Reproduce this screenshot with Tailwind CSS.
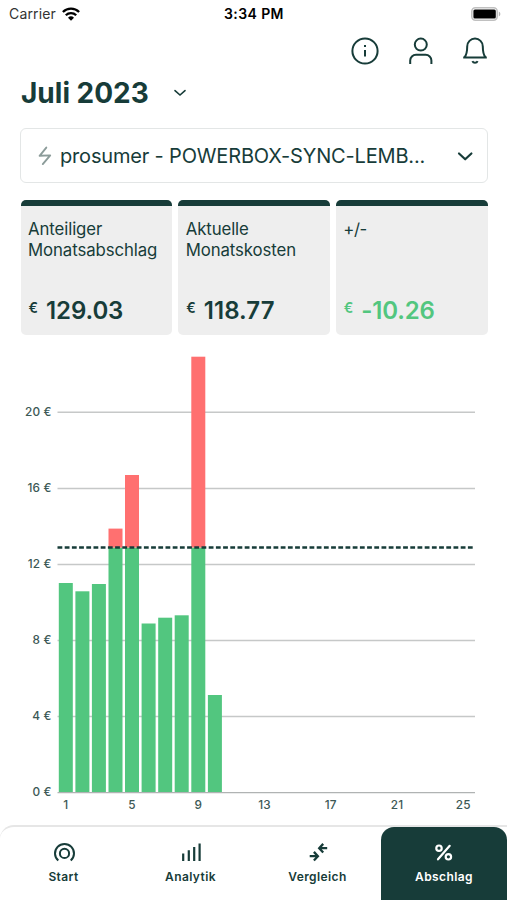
<!DOCTYPE html>
<html lang="de">
  <head>
    <meta charset="utf-8" />
    <title>Abschlag</title>
    <script src="https://cdn.jsdelivr.net/npm/@tailwindcss/browser@4"></script>
  </head>
  <body class="bg-white overflow-hidden font-['Inter','Liberation_Sans',sans-serif] text-[#173c39]">
    <div class="w-[507px] h-[900px] flex flex-col">
      <!-- STATUS BAR -->
      <div class="h-[27px] shrink-0 pl-[9px] pr-[6px] grid grid-cols-3 items-center text-black text-[14px]">
        <div class="flex items-center gap-[6px]">
          <span class="text-[#333] tracking-[0.15px]">Carrier</span>
          <svg class="w-[18px] h-[14px]" viewBox="0 0 18 14" fill="none" stroke="#000" stroke-width="2.3">
            <path d="M.9 5A11.5 11.5 0 0 1 17.1 5" />
            <path d="M3.8 8.2a7.4 7.4 0 0 1 10.4 0" />
            <path d="M9 13.8 6 10.8a4.3 4.3 0 0 1 6 0z" fill="#000" stroke="none" />
          </svg>
        </div>
        <div class="pr-[2px] text-center font-semibold whitespace-nowrap tracking-[0.4px]">3:34 PM</div>
        <svg class="justify-self-end w-[30px] h-[14px]" viewBox="0 0 30 14">
          <rect x=".8" y=".8" width="25.4" height="12.4" rx="3.6" fill="#fff" stroke="#c0c0c0" stroke-width="1.6" />
          <rect x="2.4" y="2.4" width="22.4" height="9.2" rx="1.5" fill="#000" />
          <path d="M27.8 4.6a2.6 2.6 0 0 1 0 4.8z" fill="#b5b5b5" />
        </svg>
      </div>

      <!-- TOP ICONS -->
      <div class="h-[48px] shrink-0 flex justify-end items-center gap-[26px] pr-[19px]">
        <svg class="w-[30px] h-[30px]" viewBox="0 0 30 30" fill="none" stroke="currentColor" stroke-width="2">
          <circle cx="15" cy="15" r="12.6" />
          <path d="M15 14v6.6M15 9v2" />
        </svg>
        <svg class="w-[30px] h-[30px]" viewBox="0 0 30 30" fill="none" stroke="currentColor" stroke-width="2">
          <circle cx="14.8" cy="8.6" r="6" />
          <path d="M4.2 28v-3.4a5.8 5.8 0 0 1 5.8-5.8h9.6a5.8 5.8 0 0 1 5.8 5.8V28" />
        </svg>
        <svg class="w-[26px] h-[30px]" viewBox="0 0 26 30" fill="none" stroke="currentColor" stroke-width="2">
          <path d="M1.2 21.4h23.6M2.4 21.4C5 18.4 5.2 15 5.2 10.4a7.8 7.8 0 0 1 15.6 0c0 4.6.2 8 2.8 11" />
          <path d="M10.4 25.2c.5 1.1 1.500 1.600 2.600 1.600s2.100-.5 2.600-1.600" />
        </svg>
      </div>

      <!-- MONTH -->
      <div class="h-[35px] shrink-0 flex items-center gap-6 pl-[21px]">
        <h1 class="text-[28px] leading-none font-bold whitespace-nowrap">Juli 2023</h1>
        <svg class="w-[14px] h-[10px]" viewBox="0 0 14 10" fill="none" stroke="currentColor" stroke-width="1.6" stroke-linecap="round">
          <path d="m2 2.6 5 4.400 5-4.400" />
        </svg>
      </div>

      <!-- METER SELECT -->
      <div class="mt-[18px] ml-5 mr-[19px] h-[55px] shrink-0 flex items-center border-[1.5px] border-[#e3e6e6] rounded-[6px] pl-[16px] pr-[12px]">
        <svg class="w-[16px] h-[20px]" viewBox="0 0 16 20" fill="none" stroke="#8c9c9a" stroke-width="1.9" stroke-linejoin="round" stroke-linecap="round">
          <path d="M9.3 1.6 2.6 9.8l10.6-.4-7.4 8.7" />
        </svg>
        <span class="ml-[7px] text-[20px] tracking-[-0.17px] whitespace-nowrap">prosumer - POWERBOX-SYNC-LEMB...</span>
        <svg class="ml-auto w-[20px] h-[14px]" viewBox="0 0 20 14" fill="none" stroke="currentColor" stroke-width="2.2" stroke-linecap="round" stroke-linejoin="round">
          <path d="m4 4.500 6.200 5.800 6.200-5.800" />
        </svg>
      </div>

      <!-- CARDS -->
      <div class="mt-[17px] ml-[20.5px] mr-[19.5px] h-[135px] shrink-0 grid grid-cols-3 gap-[6px]">
        <div class="rounded-[5px] overflow-hidden bg-[#eee] flex flex-col">
          <div class="h-[6px] bg-[#173c39]"></div>
          <p class="pl-[7.5px] pt-[13px] text-[16.8px] leading-[21px] tracking-[-0.1px]">Anteiliger<br />Monatsabschlag</p>
          <p class="mt-auto mb-[10px] pl-2 flex gap-[8px] font-semibold"><span class="text-[14px] leading-[22px]">€</span><span class="text-[24px] leading-7 tracking-[-0.1px]">129.03</span></p>
        </div>
        <div class="rounded-[5px] overflow-hidden bg-[#eee] flex flex-col">
          <div class="h-[6px] bg-[#173c39]"></div>
          <p class="pl-[7.5px] pt-[13px] text-[16.8px] leading-[21px] tracking-[-0.1px]">Aktuelle<br />Monatskosten</p>
          <p class="mt-auto mb-[10px] pl-2 flex gap-[8px] font-semibold"><span class="text-[14px] leading-[22px]">€</span><span class="text-[24px] leading-7 tracking-[0.1px]">118.77</span></p>
        </div>
        <div class="rounded-[5px] overflow-hidden bg-[#eee] flex flex-col">
          <div class="h-[6px] bg-[#173c39]"></div>
          <p class="pl-[7.5px] pt-[13px] text-[16.8px] leading-[21px] tracking-[-0.5px]">+/-</p>
          <p class="mt-auto mb-[10px] pl-2 flex gap-[8px] font-semibold text-[#52c67f]"><span class="text-[14px] leading-[22px]">€</span><span class="text-[24px] leading-7 tracking-[-0.2px]">-10.26</span></p>
        </div>
      </div>

      <!-- CHART -->
      <svg class="w-[507px] h-[490px] shrink-0" viewBox="0 335 507 490">
        <path d="M57.5 412.2H475M57.5 488.5H475M57.5 564.5H475M57.5 640.5H475M57.5 716.5H475" stroke="#c6c8c8" stroke-width="1.4" />
        <g fill="#52c67f">
          <rect x="58.8" y="583" width="14" height="209.5" />
          <rect x="75.4" y="591.3" width="14" height="201.2" />
          <rect x="91.9" y="584" width="14" height="208.5" />
          <rect x="108.5" y="547.5" width="14" height="245" />
          <rect x="125" y="547.5" width="14" height="245" />
          <rect x="141.6" y="623.5" width="14" height="169" />
          <rect x="158.2" y="617.7" width="14" height="174.8" />
          <rect x="174.7" y="615.3" width="14" height="177.2" />
          <rect x="191.3" y="547.5" width="14" height="245" />
          <rect x="207.9" y="695" width="14" height="97.5" />
        </g>
        <g fill="#ff7070">
          <rect x="108.5" y="528.6" width="14" height="19" />
          <rect x="125" y="475" width="14" height="72.5" />
          <rect x="191.3" y="356.7" width="14" height="190.8" />
        </g>
        <path d="M57.5 792.7H475" stroke="#b0b3b3" stroke-width="1.2" />
        <!-- daily budget -->
        <path d="M57.5 547.5H475" stroke="#173c39" stroke-width="2.4" stroke-dasharray="4.8 2.4" />
        <g class="text-[11.8px] tracking-[0.2px]" fill="#3c5855" font-weight="500" text-anchor="end">
          <text x="51.7" y="415.7">20 €</text>
          <text x="51.7" y="491.9">16 €</text>
          <text x="51.7" y="567.9">12 €</text>
          <text x="51.7" y="644">8 €</text>
          <text x="51.7" y="720">4 €</text>
          <text x="51.7" y="796">0 €</text>
        </g>
        <g class="text-[11.8px] tracking-[0.2px]" fill="#3c5855" font-weight="500" text-anchor="middle">
          <text x="65.8" y="809.3">1</text>
          <text x="132" y="809.3">5</text>
          <text x="198.3" y="809.3">9</text>
          <text x="264.5" y="809.3">13</text>
          <text x="330.8" y="809.3">17</text>
          <text x="397" y="809.3">21</text>
          <text x="463.3" y="809.3">25</text>
        </g>
      </svg>

      <!-- TAB BAR -->
      <div class="h-[75px] shrink-0 border-t-2 border-[#e6e6e6] rounded-tl-[14px] grid grid-cols-[127px_127px_127px_126px] bg-white text-[12px] tracking-[0.4px] font-semibold">
        <a href="#" class="pt-[14px] flex flex-col items-center gap-[4px]">
          <svg class="w-6 h-6" viewBox="0 0 24 24" fill="none" stroke="currentColor" stroke-width="2">
            <circle cx="12.5" cy="12.4" r="4.6" />
            <path d="M6.3 19.6a9.5 9.5 0 1 1 12.4 0" />
          </svg>
          <span class="leading-4">Start</span>
        </a>
        <a href="#" class="pt-[14px] flex flex-col items-center gap-[4px]">
          <svg class="w-6 h-6" viewBox="0 0 24 24" fill="none" stroke="currentColor" stroke-width="2.2">
            <path d="M4.2 20v-7.5M9.8 20V9.3M15.2 20V6M20.6 20V2.5" />
          </svg>
          <span class="leading-4">Analytik</span>
        </a>
        <a href="#" class="pt-[14px] flex flex-col items-center gap-[4px]">
          <svg class="w-6 h-6" viewBox="0 0 24 24" fill="none" stroke="currentColor" stroke-width="2.3">
            <path d="M21.2 7.2H14M17.2 2.9l-4 4.3 4 4.3M3.7 15.2h7.500M7.900 10.900l4 4.300-4 4.300" />
          </svg>
          <span class="leading-4">Vergleich</span>
        </a>
        <a href="#" class="pt-[14px] flex flex-col items-center gap-[4px] rounded-t-[13px] bg-[#173c39] text-white">
          <svg class="w-6 h-6" viewBox="0 0 24 24" fill="none" stroke="currentColor" stroke-width="2.2" stroke-linecap="round">
            <circle cx="7" cy="7.2" r="2.7" />
            <circle cx="16.4" cy="15.8" r="2.7" />
            <path d="M17.7 4.8 6 18.3" />
          </svg>
          <span class="leading-4">Abschlag</span>
        </a>
      </div>
    </div>
  </body>
</html>
